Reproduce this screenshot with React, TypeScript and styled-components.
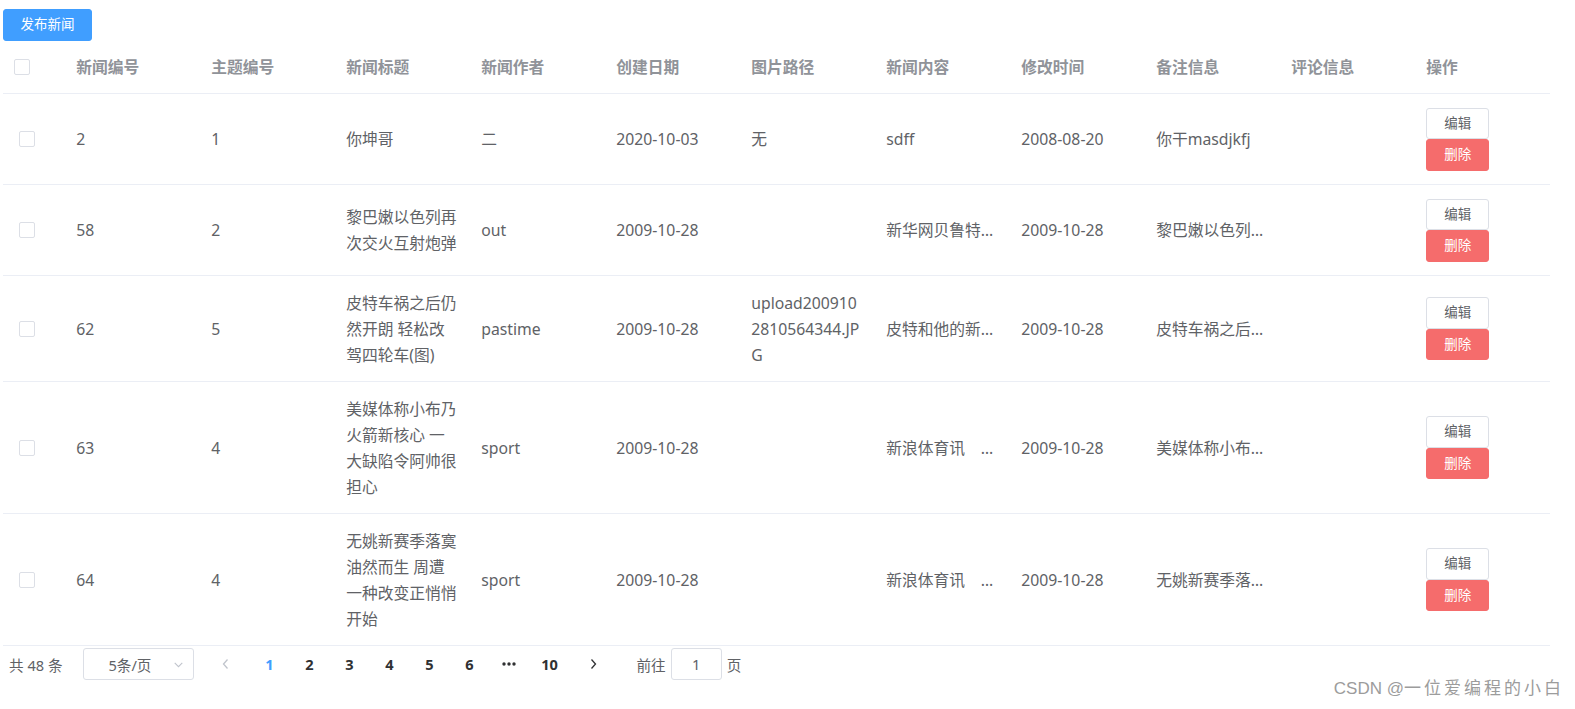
import React from "react";
import styled, { createGlobalStyle } from "styled-components";

type News = {
  id: string;
  topic: string;
  title: string;
  author: string;
  created: string;
  pic: string;
  content: string;
  modified: string;
  remark: string;
  comment: string;
};

const rows: News[] = [
  { id: "2", topic: "1", title: "你坤哥", author: "二", created: "2020-10-03", pic: "无", content: "sdff", modified: "2008-08-20", remark: "你干masdjkfj", comment: "" },
  { id: "58", topic: "2", title: "黎巴嫩以色列再次交火互射炮弹", author: "out", created: "2009-10-28", pic: "", content: "新华网贝鲁特10月28日电", modified: "2009-10-28", remark: "黎巴嫩以色列再次交火互射炮弹", comment: "" },
  { id: "62", topic: "5", title: "皮特车祸之后仍然开朗 轻松改驾四轮车(图)", author: "pastime", created: "2009-10-28", pic: "upload2009102810564344.JPG", content: "皮特和他的新车（图）", modified: "2009-10-28", remark: "皮特车祸之后仍然开朗", comment: "" },
  { id: "63", topic: "4", title: "美媒体称小布乃火箭新核心 一大缺陷令阿帅很担心", author: "sport", created: "2009-10-28", pic: "", content: "新浪体育讯　　北京时间", modified: "2009-10-28", remark: "美媒体称小布乃火箭新核心", comment: "" },
  { id: "64", topic: "4", title: "无姚新赛季落寞油然而生 周遭一种改变正悄悄开始", author: "sport", created: "2009-10-28", pic: "", content: "新浪体育讯　　北京时间", modified: "2009-10-28", remark: "无姚新赛季落寞油然而生", comment: "" },
];

const headers = ["新闻编号", "主题编号", "新闻标题", "新闻作者", "创建日期", "图片路径", "新闻内容", "修改时间", "备注信息", "评论信息", "操作"];

const pages = ["1", "2", "3", "4", "5", "6", "more", "10"];

export default function App() {
  return (
    <Page>
      <GlobalStyle />
      <PrimaryButton>发布新闻</PrimaryButton>
      <Table>
        <HeaderRow>
          <CheckCell $head>
            <Checkbox />
          </CheckCell>
          {headers.map((h) => (
            <HeadCell key={h}>{h}</HeadCell>
          ))}
        </HeaderRow>
        {rows.map((r) => (
          <BodyRow key={r.id}>
            <CheckCell>
              <Checkbox />
            </CheckCell>
            <Cell>{r.id}</Cell>
            <Cell>{r.topic}</Cell>
            <Cell>{r.title}</Cell>
            <Cell>{r.author}</Cell>
            <Cell>{r.created}</Cell>
            <Cell>{r.pic}</Cell>
            <Cell $ellipsis>{r.content}</Cell>
            <Cell>{r.modified}</Cell>
            <Cell $ellipsis>{r.remark}</Cell>
            <Cell>{r.comment}</Cell>
            <Cell>
              <Actions>
                <MiniButton>编辑</MiniButton>
                <MiniButton $danger>删除</MiniButton>
              </Actions>
            </Cell>
          </BodyRow>
        ))}
      </Table>
      <Pagination>
        <Total>共 48 条</Total>
        <SizeSelect>
          <span>5条/页</span>
          <SelectArrow viewBox="0 0 12 12">
            <path d="M2.5 4.5 L6 8 L9.5 4.5" fill="none" stroke="#c0c4cc" strokeWidth="1" />
          </SelectArrow>
        </SizeSelect>
        <NavButton $disabled>
          <svg width="12" height="14" viewBox="0 0 12 14">
            <path d="M7.5 2.5 L3.5 7 L7.5 11.5" fill="none" stroke="#c0c4cc" strokeWidth="1.3" />
          </svg>
        </NavButton>
        <Pager>
          {pages.map((p) => (
            <PageItem key={p} $active={p === "1"}>
              {p === "more" ? (
                <svg width="14" height="4" viewBox="0 0 14 4">
                  <circle cx="2" cy="2" r="1.7" fill="#303133" />
                  <circle cx="7" cy="2" r="1.7" fill="#303133" />
                  <circle cx="12" cy="2" r="1.7" fill="#303133" />
                </svg>
              ) : (
                p
              )}
            </PageItem>
          ))}
        </Pager>
        <NavButton>
          <svg width="12" height="14" viewBox="0 0 12 14">
            <path d="M4.5 2.5 L8.5 7 L4.5 11.5" fill="none" stroke="#303133" strokeWidth="1.3" />
          </svg>
        </NavButton>
        <Jumper>
          前往
          <JumpInput>1</JumpInput>
          页
        </Jumper>
      </Pagination>
      <Watermark>
        CSDN @<CjkMark>一位爱编程的小白</CjkMark>
      </Watermark>
    </Page>
  );
}

const GlobalStyle = createGlobalStyle`
  html, body {
    margin: 0;
    padding: 0;
    background: #ffffff;
  }
  body {
    font-family: "Noto Sans", "Noto Sans CJK SC", sans-serif;
    color: #606266;
  }
`;

const Page = styled.div`
  position: relative;
  width: 1575px;
  height: 709px;
  padding: 9px 0 0 3px;
  box-sizing: border-box;
  overflow: hidden;
`;

const PrimaryButton = styled.button`
  display: block;
  width: 89px;
  height: 32px;
  padding: 0;
  border: 1px solid #409eff;
  border-radius: 3px;
  background: #409eff;
  color: #ffffff;
  font-family: inherit;
  font-size: 13.5px;
  line-height: 1;
`;

const Table = styled.div`
  width: 1547px;
`;

const HeaderRow = styled.div`
  display: grid;
  grid-template-columns: 62px repeat(11, 135px);
  align-items: center;
  border-bottom: 1px solid #ebeef5;
`;

const BodyRow = styled(HeaderRow)``;

const HeadCell = styled.div`
  padding: 13px 11.25px;
  font-size: 15.75px;
  line-height: 26px;
  font-weight: 700;
  color: #909399;
  white-space: nowrap;
`;

const Cell = styled.div<{ $ellipsis?: boolean }>`
  min-width: 0;
  padding: 13.5px 11.25px;
  font-size: 15.75px;
  line-height: 26px;
  color: #606266;
  word-break: break-all;
  ${(p) =>
    p.$ellipsis &&
    `
    white-space: nowrap;
    overflow: hidden;
    text-overflow: ellipsis;
  `}
`;

const CheckCell = styled.div<{ $head?: boolean }>`
  display: flex;
  align-items: center;
  padding-left: ${(p) => (p.$head ? "11px" : "16px")};
`;

const Checkbox = styled.span`
  display: inline-block;
  width: 14px;
  height: 14px;
  border: 1px solid #dcdfe6;
  border-radius: 2px;
  background: #ffffff;
`;

const Actions = styled.div`
  display: flex;
  flex-direction: column;
  align-items: flex-start;
`;

const MiniButton = styled.button<{ $danger?: boolean }>`
  width: 63px;
  height: 31.5px;
  padding: 0;
  border: 1px solid ${(p) => (p.$danger ? "#f56c6c" : "#dcdfe6")};
  border-radius: 3px;
  background: ${(p) => (p.$danger ? "#f56c6c" : "#ffffff")};
  color: ${(p) => (p.$danger ? "#ffffff" : "#606266")};
  font-family: inherit;
  font-size: 13.5px;
  line-height: 1;
`;

const Pagination = styled.div`
  display: flex;
  align-items: center;
  height: 32px;
  margin-top: 2px;
  padding-left: 6px;
  font-size: 14.6px;
  color: #606266;
`;

const Total = styled.span`
  margin-right: 21px;
  white-space: nowrap;
`;

const SizeSelect = styled.div`
  position: relative;
  display: flex;
  align-items: center;
  justify-content: center;
  box-sizing: border-box;
  width: 111px;
  height: 31.5px;
  padding-right: 18px;
  border: 1px solid #dcdfe6;
  border-radius: 3px;
  font-size: 14.6px;
  color: #606266;
`;

const SelectArrow = styled.svg`
  position: absolute;
  right: 8px;
  top: 9px;
  width: 13px;
  height: 13px;
`;

const NavButton = styled.div<{ $disabled?: boolean }>`
  display: flex;
  align-items: center;
  justify-content: center;
  width: 36px;
  height: 31.5px;
  margin-left: ${(p) => (p.$disabled ? "14px" : "6px")};
  margin-right: ${(p) => (p.$disabled ? "5px" : "0")};
`;

const Pager = styled.div`
  display: flex;
  align-items: center;
`;

const PageItem = styled.div<{ $active?: boolean }>`
  display: flex;
  align-items: center;
  justify-content: center;
  width: 40px;
  height: 31.5px;
  font-size: 14.6px;
  font-weight: 700;
  color: ${(p) => (p.$active ? "#409eff" : "#303133")};
`;

const Jumper = styled.div`
  display: flex;
  align-items: center;
  gap: 5px;
  margin-left: 25px;
  font-size: 14.6px;
  color: #606266;
`;

const JumpInput = styled.div`
  display: flex;
  align-items: center;
  justify-content: center;
  box-sizing: border-box;
  width: 51px;
  height: 31.5px;
  border: 1px solid #dcdfe6;
  border-radius: 3px;
  font-size: 14.6px;
  color: #606266;
`;

const Watermark = styled.div`
  position: absolute;
  right: 11px;
  bottom: 10px;
  font-family: "Liberation Sans", "Noto Sans CJK SC", sans-serif;
  font-size: 17px;
  color: #9c9c9c;
  white-space: nowrap;
`;

const CjkMark = styled.span`
  letter-spacing: 3px;
`;
